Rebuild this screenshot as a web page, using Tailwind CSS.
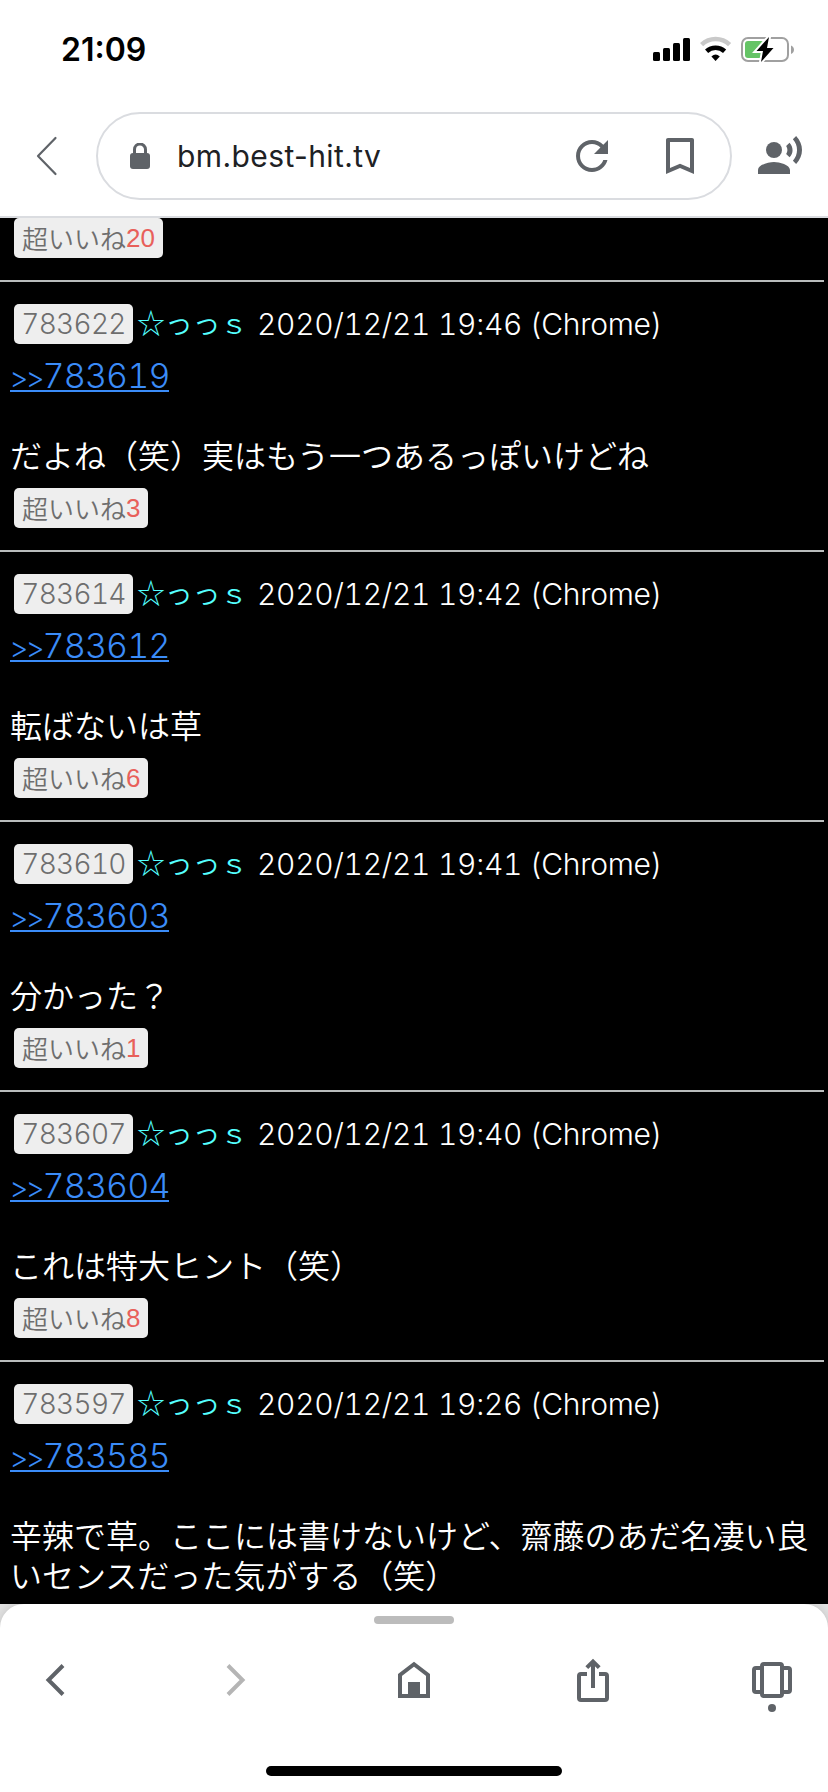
<!DOCTYPE html>
<html lang="ja">
<head>
    <meta charset="UTF-8">
    <meta name="viewport" content="width=device-width, initial-scale=1.0">
    <title>bm.best-hit.tv</title>
    <script src="https://cdn.jsdelivr.net/npm/@tailwindcss/browser@4"></script>
</head>
<body class="bg-white h-[1792px] w-[828px] overflow-hidden flex flex-col font-['Inter','Noto_Sans_CJK_JP',sans-serif]">

    <!-- Status bar -->
    <header class="h-[218px] shrink-0 border-b-2 border-[#dadce0]">
        <div class="h-[112px] pl-[61px] pr-[34px] pb-[13px] flex items-center justify-between">
            <span class="text-[32px] leading-none font-semibold text-black">21:09</span>
            <svg width="141" height="27" viewBox="0 0 141 27">
                <rect x="0" y="16" width="7" height="9" rx="1.5"/>
                <rect x="10" y="12" width="7" height="13" rx="1.5"/>
                <rect x="20" y="7" width="7" height="18" rx="1.5"/>
                <rect x="30" y="2" width="7" height="23" rx="1.5"/>
                <path d="M48.600 8.600a20.500 20.500 0 0 1 28 0" fill="none" stroke="#c9c9c9" stroke-width="4.600"/>
                <path d="M53.600 15.200a13.300 13.300 0 0 1 18 0" fill="none" stroke="#000" stroke-width="4.600"/>
                <path d="M58.400 20.400a6.500 6.500 0 0 1 8.400 0L62.600 25z"/>
                <rect x="89" y="2" width="46" height="23" rx="6" fill="none" stroke="#a0a0a0" stroke-width="2"/>
                <rect x="92" y="5" width="19" height="17" rx="3" fill="#65c466"/>
                <path d="M116 1L103.500 15h6.500l-2 11L120.500 12H114z" fill="#000" stroke="#fff" stroke-width="4" paint-order="stroke"/>
                <path d="M138 9.500c4 1.500 4 7 0 8.500z" fill="#a0a0a0"/>
            </svg>
        </div>

        <!-- Address bar -->
        <div class="h-[88px] flex items-center pl-[34px] pr-[24px]">
            <svg width="24" height="40" viewBox="0 0 24 40" fill="none" stroke="#5f6368" stroke-width="2.2" stroke-linecap="round" stroke-linejoin="round"><path d="M21.500 2L4 20l17.500 18"/></svg>
            <div class="ml-[38px] w-[636px] h-[88px] rounded-full border-2 border-[#dadce0] flex items-center pl-[32px] pr-[26px]">
                <svg width="20" height="26" viewBox="0 0 20 26"><path d="M4.500 11V6.500a5.500 5.500 0 0 1 11 0V11" fill="none" stroke="#5f6368" stroke-width="3"/><rect y="10" width="20" height="16" rx="3" fill="#5f6368"/></svg>
                <span class="ml-[27px] text-[30px] leading-none tracking-[0.400px] text-[#202124] flex-1">bm.best-hit.tv</span>
                <svg width="48" height="48" viewBox="0 0 24 24" fill="#5f6368"><path d="M17.650 6.350C16.200 4.900 14.210 4 12 4c-4.420 0-7.990 3.580-7.990 8s3.570 8 7.990 8c3.730 0 6.840-2.550 7.730-6h-2.080c-.82 2.330-3.040 4-5.650 4-3.310 0-6-2.690-6-6s2.690-6 6-6c1.660 0 3.140.69 4.220 1.780L13 11h7V4z"/></svg>
                <svg class="ml-[40px]" width="48" height="48" viewBox="0 0 24 24" fill="#5f6368"><path d="M18 3H6c-.6 0-1 .4-1 1v17l7-3 7 3V4c0-.6-.4-1-1-1zm-1 15l-5-2.180L7 18V5h10z"/></svg>
            </div>
            <svg class="ml-[24px]" width="48" height="48" viewBox="0 0 24 24" fill="#5f6368"><circle cx="9" cy="9" r="4"/><path d="M9 15c-2.670 0-8 1.340-8 4v2h16v-2c0-2.660-5.330-4-8-4zM16.760 5.360l-1.680 1.690c.84 1.180.84 2.710 0 3.890l1.680 1.690c2.020-2.020 2.020-5.070 0-7.270zM20.070 2l-1.630 1.630c2.770 3.020 2.770 7.560 0 10.740L20.070 16c3.900-3.890 3.910-9.950 0-14z"/></svg>
        </div>
    </header>

    <!-- Thread -->
    <main class="h-[1386px] shrink-0 overflow-hidden bg-black text-white font-[350]">
        <div class="h-[62px] pl-[14px]">
            <span class="h-[40px] px-2 inline-flex items-center rounded-[5px] bg-[#eee] text-[#6e6e6e] text-[26px] leading-none font-['Noto_Sans_CJK_JP',sans-serif]">超いいね<b class="font-normal text-[#e8605a] font-['Liberation_Sans',sans-serif]">20</b></span>
        </div>
        <div id="posts"></div>
    </main>

    <!-- Bottom toolbar -->
    <footer class="h-[188px] shrink-0 bg-[#e2e2e2]">
        <div class="h-full rounded-t-[24px] bg-white shadow-[0_0_10px_rgba(0,0,0,0.15)] flex flex-col items-center pt-3">
            <div class="w-[80px] h-[8px] rounded-full bg-[#bcbcbc]"></div>
            <nav class="mt-[32px] w-full px-[32px] flex justify-between">
                <svg width="48" height="56" viewBox="0 0 48 56" fill="none" stroke="#5f6368" stroke-width="4"><path d="M39 9.500L24.500 24 39 38.500" transform="translate(-8)"/></svg>
                <svg width="48" height="56" viewBox="0 0 48 56" fill="none" stroke="#b5b5b5" stroke-width="4"><path d="M17 9.500L31.500 24 17 38.500"/></svg>
                <svg width="48" height="56" viewBox="0 0 48 56" fill="none" stroke="#5f6368" stroke-width="4"><path d="M10 40V19L24 8.200 38 19v21z"/><path d="M18 26h12v14H18z" fill="#5f6368" stroke="none"/></svg>
                <svg width="48" height="56" viewBox="0 0 48 56" fill="none" stroke="#5f6368" stroke-width="4"><path d="M18 18h-6a2 2 0 0 0-2 2v22a2 2 0 0 0 2 2h24a2 2 0 0 0 2-2V20a2 2 0 0 0-2-2h-6M24 32V6M17.800 11.700L24 5.500l6.200 6.200"/></svg>
                <svg width="48" height="56" viewBox="0 0 48 56" fill="none" stroke="#5f6368" stroke-width="4"><rect x="14" y="8" width="20" height="32" rx="2"/><path d="M14 12H8a2 2 0 0 0-2 2v20a2 2 0 0 0 2 2h6M34 12h6a2 2 0 0 1 2 2v20a2 2 0 0 1-2 2h-6"/><circle cx="24" cy="52" r="4" fill="#5f6368" stroke="none"/></svg>
            </nav>
            <div class="mt-[54px] w-[296px] h-[10px] rounded-full bg-black"></div>
        </div>
    </footer>

    <script>
        const posts = [
            { id: 783622, time: '19:46', ref: 783619, text: 'だよね（笑）実はもう一つあるっぽいけどね', likes: 3 },
            { id: 783614, time: '19:42', ref: 783612, text: '転ばないは草', likes: 6 },
            { id: 783610, time: '19:41', ref: 783603, text: '分かった？', likes: 1 },
            { id: 783607, time: '19:40', ref: 783604, text: 'これは特大ヒント（笑）', likes: 8 },
            { id: 783597, time: '19:26', ref: 783585, text: '辛辣で草。ここには書けないけど、齋藤のあだ名凄い良いセンスだった気がする（笑）' },
        ];

        const likeBadge = n => `
                <div class="pt-[14px] pb-[22px] pl-[14px] flex">
                    <span class="h-[40px] px-2 inline-flex items-center rounded-[5px] bg-[#eee] text-[#6e6e6e] text-[26px] leading-none font-['Noto_Sans_CJK_JP',sans-serif]">超いいね<b class="font-normal text-[#e8605a] font-['Liberation_Sans',sans-serif]">${n}</b></span>
                </div>`;

        document.getElementById('posts').innerHTML = posts.map(p => `
            <article>
                <div class="h-[2px] w-[824px] bg-[#b9bcbc]"></div>
                <div class="pt-[22px] pl-[14px] flex items-center whitespace-pre leading-none">
                    <span class="w-[119px] h-[40px] flex items-center justify-center rounded-[5px] bg-[#eee] text-[#6e6e6e] text-[28px] tracking-[-0.700px] tabular-nums">${p.id}</span>
                    <span class="ml-[4px] w-[120px] pb-[4px] text-[#5ff] text-[28px] tracking-[-0.300px] font-['Noto_Sans_CJK_JP',sans-serif]">☆っっｓ</span>
                    <span class="text-[30px] tracking-[-0.300px] tabular-nums">2020/12/21 ${p.time} (Chrome)</span>
                </div>
                <div class="h-[48px] mt-[8px] pl-[10px]">
                    <a href="#" class="inline-flex items-baseline h-[40px] w-[159px] border-b-2 border-[#3b8cf8] text-[#3b8cf8] text-[34px] leading-[48px] tracking-[-0.800px] tabular-nums"><span class="w-[33px] text-[29px] tracking-[-2.500px]">&gt;&gt;</span>${p.ref}</a>
                </div>
                <p class="mt-[34px] pl-[10px] pr-[14px] text-[32px] leading-[40px] font-['Noto_Sans_CJK_JP',sans-serif]">${p.text}</p>
                ${p.likes ? likeBadge(p.likes) : ''}
            </article>`).join('');
    </script>
</body>
</html>
